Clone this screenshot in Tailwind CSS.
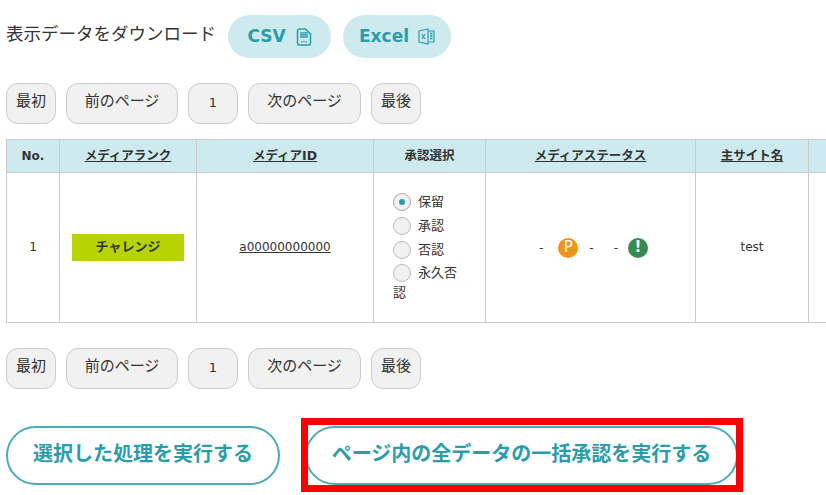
<!DOCTYPE html>
<html lang="ja"><head><meta charset="utf-8">
<script src="https://cdn.jsdelivr.net/npm/@tailwindcss/browser@4"></script>
</head>
<body class="bg-white overflow-hidden">
<div class="w-[826px] h-[495px] overflow-hidden pl-[6px] pt-[15px] text-[#333] font-['DejaVu_Sans','Noto_Sans_CJK_JP',sans-serif]">
  <div class="flex items-center h-[43px]">
    <span class="text-[17.5px] w-[222px] whitespace-nowrap pb-[4px]">表示データをダウンロード</span>
    <a class="flex items-center justify-center w-[103px] h-[43px] rounded-full bg-[#cdebef] text-[#2a9dab] font-bold text-[17px]">CSV
      <svg class="ml-[10px]" width="16" height="18" viewBox="0 0 16 18" fill="none"><path d="M1.5 3a2 2 0 0 1 2-2h6l5 5v9a2 2 0 0 1-2 2h-9a2 2 0 0 1-2-2z" stroke="#2a9dab" stroke-width="1.500"/><rect x="4" y="4" width="8" height="6" fill="#2a9dab" opacity=".7"/><rect x="5" y="13" width="6" height="1.5" fill="#2a9dab" opacity=".6"/></svg>
    </a>
    <a class="flex items-center justify-center w-[108px] h-[43px] rounded-full bg-[#cdebef] text-[#2a9dab] font-bold text-[17px] ml-[12px]">Excel
      <svg class="ml-[9px]" width="17" height="17" viewBox="0 0 17 17" fill="none"><path d="M1 3l9-2v15l-9-2z" stroke="#2a9dab" stroke-width="1.2"/><path d="M10 3h6v11h-6" stroke="#2a9dab" stroke-width="1.2"/><path d="M4 6l3 5M7 6l-3 5" stroke="#2a9dab" stroke-width="1.1"/><path d="M12 5.500h2.500M12 8h2.500M12 10.500h2.500" stroke="#2a9dab" stroke-width="1.3"/></svg>
    </a>
  </div>
  <div class="flex gap-[10px] mt-[25px] text-[15px]">
    <button class="w-[50px] h-[41px] rounded-[12px] border border-[#ccc] bg-[#f1f1f1] pb-[4px]">最初</button>
    <button class="w-[112px] h-[41px] rounded-[12px] border border-[#ccc] bg-[#f1f1f1] pb-[4px]">前のページ</button>
    <button class="w-[50px] h-[41px] rounded-[12px] border border-[#ccc] bg-[#f1f1f1] text-[13px] pb-[2px]">1</button>
    <button class="w-[113px] h-[41px] rounded-[12px] border border-[#ccc] bg-[#f1f1f1] pb-[4px]">次のページ</button>
    <button class="w-[50px] h-[41px] rounded-[12px] border border-[#ccc] bg-[#f1f1f1] pb-[4px]">最後</button>
  </div>
  <table class="mt-[15px] border-collapse table-fixed w-[900px] text-[12px]">
    <colgroup><col class="w-[53px]"><col class="w-[137px]"><col class="w-[177px]"><col class="w-[112px]"><col class="w-[210px]"><col class="w-[113px]"><col class="w-[98px]"></colgroup>
    <thead><tr class="h-[33px] bg-[#cdebef] font-bold text-[12.5px]">
      <th class="border border-[#ccc] text-[12px]">No.</th>
      <th class="border border-[#ccc] underline">メディアランク</th>
      <th class="border border-[#ccc] underline">メディアID</th>
      <th class="border border-[#ccc]">承認選択</th>
      <th class="border border-[#ccc] underline">メディアステータス</th>
      <th class="border border-[#ccc] underline">主サイト名</th>
      <th class="border border-[#ccc]"></th>
    </tr></thead>
    <tbody><tr class="h-[150px]">
      <td class="border border-[#ccc] text-center pb-[2px]">1</td>
      <td class="border border-[#ccc]"><div class="mx-auto w-[112px] h-[27px] bg-[#b6d400] flex items-center justify-center font-bold text-[13px] pb-[2px]">チャレンジ</div></td>
      <td class="border border-[#ccc] text-center underline text-[12px] pb-[2px]">a00000000000</td>
      <td class="border border-[#ccc] pl-[19px] pb-[4px] text-[13px]">
        <div class="flex items-center gap-[7px] h-[24px]"><span class="w-[18px] h-[18px] rounded-full border border-[#aaa] bg-[#f1f1f1] flex items-center justify-center"><span class="w-[6px] h-[6px] rounded-full bg-[#2a9dab]"></span></span>保留</div>
        <div class="flex items-center gap-[7px] h-[24px]"><span class="w-[18px] h-[18px] rounded-full border border-[#bbb] bg-[#f1f1f1]"></span>承認</div>
        <div class="flex items-center gap-[7px] h-[23px]"><span class="w-[18px] h-[18px] rounded-full border border-[#bbb] bg-[#f1f1f1]"></span>否認</div>
        <div class="flex items-center gap-[7px] h-[24px]"><span class="w-[18px] h-[18px] rounded-full border border-[#bbb] bg-[#f1f1f1]"></span>永久否</div>
        <div class="leading-[16px]">認</div>
      </td>
      <td class="border border-[#ccc]">
        <div class="flex items-center justify-center pl-[6px]">
          <span>-</span>
          <span class="ml-[15px] w-[20px] h-[20px] rounded-full bg-[#f09419] text-white text-[15px] flex items-center justify-center">P</span>
          <span class="ml-[11px]">-</span>
          <span class="ml-[20px]">-</span>
          <span class="ml-[10px] w-[20px] h-[20px] rounded-full bg-[#388a52] text-white text-[15px] font-bold flex items-center justify-center">!</span>
        </div>
      </td>
      <td class="border border-[#ccc] text-center pb-[2px]">test</td>
      <td class="border border-[#ccc]"></td>
    </tr></tbody>
  </table>
  <div class="flex gap-[10px] mt-[25px] text-[15px]">
    <button class="w-[50px] h-[41px] rounded-[12px] border border-[#ccc] bg-[#f1f1f1] pb-[4px]">最初</button>
    <button class="w-[112px] h-[41px] rounded-[12px] border border-[#ccc] bg-[#f1f1f1] pb-[4px]">前のページ</button>
    <button class="w-[50px] h-[41px] rounded-[12px] border border-[#ccc] bg-[#f1f1f1] text-[13px] pb-[2px]">1</button>
    <button class="w-[113px] h-[41px] rounded-[12px] border border-[#ccc] bg-[#f1f1f1] pb-[4px]">次のページ</button>
    <button class="w-[50px] h-[41px] rounded-[12px] border border-[#ccc] bg-[#f1f1f1] pb-[4px]">最後</button>
  </div>
  <div class="flex gap-[25px] mt-[37px]">
    <button class="w-[274px] h-[59px] rounded-full border-2 border-[#4aabb8] bg-white text-[#2a9dab] font-bold text-[20px] pb-[4px]">選択した処理を実行する</button>
    <div class="relative">
      <button class="w-[433px] h-[59px] rounded-full border-2 border-[#4aabb8] bg-white text-[#2a9dab] font-bold text-[20px] pb-[4px]">ページ内の全データの一括承認を実行する</button>
      <div class="absolute left-[-4px] right-[-5px] top-[-8px] bottom-[-7px] border-[7px] border-[#ff0000]"></div>
    </div>
  </div>
</div>
</body></html>
